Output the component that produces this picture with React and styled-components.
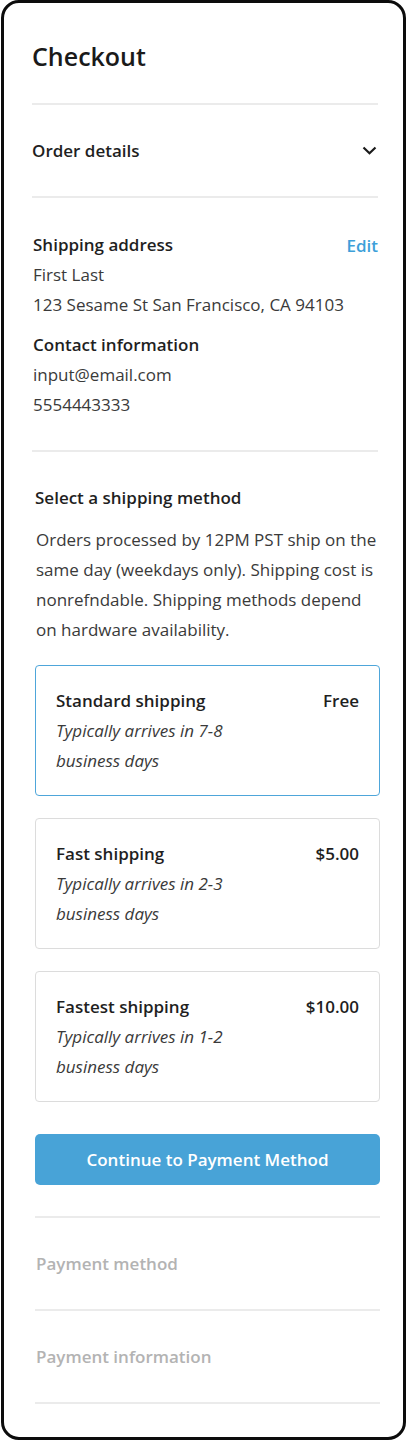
import styled, { createGlobalStyle } from "styled-components";

const GlobalStyle = createGlobalStyle`
	* {
		box-sizing: border-box;
	}
	body {
		margin: 0;
		background: #fff;
		font-family: "Open Sans", "Noto Sans", sans-serif;
		color: #1f1f1f;
	}
`;

const Frame = styled.div`
	width: 405px;
	height: 1440px;
	margin-left: 1px;
	border: 3px solid #0c0c0c;
	border-radius: 18px;
	padding: 37px 25px 0 28px;
	display: flex;
	flex-direction: column;
`;

const Title = styled.h1`
	margin: 0 0 31px;
	font-size: 25px;
	line-height: 32px;
	font-weight: 600;
	color: #1a1a1a;
`;

const Divider = styled.hr`
	margin: 0;
	border: none;
	height: 2px;
	background: #ebebeb;
`;

const Toggle = styled.div`
	height: 91px;
	display: flex;
	align-items: center;
	justify-content: space-between;
	padding: 0 1px 0 ${(p) => (p.$muted ? 1 : 0)}px;
	font-size: 17px;
	font-weight: 600;
	color: ${(p) => (p.$muted ? "#b3b3b3" : "#1f1f1f")};
`;

const Block = styled.div`
	padding: 32px 0 30px 1px;
`;

const Row = styled.div`
	display: flex;
	justify-content: space-between;
	align-items: center;
`;

const Label = styled.div`
	font-size: 17px;
	line-height: 30px;
	font-weight: 600;
	color: #1f1f1f;
	margin-top: ${(p) => p.$gap || 0}px;
`;

const EditLink = styled.a`
	font-size: 17px;
	font-weight: 600;
	color: #3d9fd9;
	text-decoration: none;
`;

const Text = styled.div`
	font-size: 17px;
	line-height: 30px;
	color: #3a3a3a;
`;

const LowerSection = styled.div`
	padding: 31px 0 0 3px;
	margin-right: -2px;
	display: flex;
	flex-direction: column;
`;

const Intro = styled.p`
	margin: 12px 0 20px 1px;
	font-size: 17px;
	line-height: 30px;
	color: #3a3a3a;
`;

const Options = styled.div`
	display: flex;
	flex-direction: column;
	gap: 22px;
`;

const Option = styled.div`
	border: 1px solid ${(p) => (p.$selected ? "#4ea6da" : "#dcdcdc")};
	border-radius: 4px;
	padding: 20px 20px 19px;
`;

const OptionTitle = styled.span`
	font-size: 17px;
	line-height: 30px;
	font-weight: 600;
	color: #1f1f1f;
`;

const Note = styled.div`
	font-size: 17px;
	line-height: 30px;
	font-style: italic;
	color: #3a3a3a;
	width: 210px;
`;

const Button = styled.button`
	width: 100%;
	height: 51px;
	margin: 32px 0 31px;
	border: none;
	border-radius: 5px;
	background: #48a3d7;
	color: #fff;
	font-family: inherit;
	font-size: 17px;
	font-weight: 600;
`;

const shippingOptions = [
	{ name: "Standard shipping", price: "Free", days: "7-8", selected: true },
	{ name: "Fast shipping", price: "$5.00", days: "2-3" },
	{ name: "Fastest shipping", price: "$10.00", days: "1-2" },
];

const Chevron = () => (
	<svg width="15" height="9" viewBox="0 0 15 9" fill="none">
		<polyline points="1.5,1.5 7.5,7.2 13.5,1.5" stroke="#1a1a1a" strokeWidth="2.2" />
	</svg>
);

const App = () => (
	<>
		<GlobalStyle />
		<Frame>
			<Title>Checkout</Title>
			<Divider />
			<Toggle>
				Order details
				<Chevron />
			</Toggle>
			<Divider />

			<Block>
				<Row>
					<Label>Shipping address</Label>
					<EditLink href="#">Edit</EditLink>
				</Row>
				<Text>First Last</Text>
				<Text>123 Sesame St San Francisco, CA 94103</Text>
				<Label $gap={10}>Contact information</Label>
				<Text>input@email.com</Text>
				<Text>5554443333</Text>
			</Block>
			<Divider />

			<LowerSection>
				<Label>Select a shipping method</Label>
				<Intro>
					Orders processed by 12PM PST ship on the same day (weekdays only).
					Shipping cost is nonrefndable. Shipping methods depend on hardware
					availability.
				</Intro>
				<Options>
					{shippingOptions.map((opt) => (
						<Option key={opt.name} $selected={opt.selected}>
							<Row>
								<OptionTitle>{opt.name}</OptionTitle>
								<OptionTitle>{opt.price}</OptionTitle>
							</Row>
							<Note>Typically arrives in {opt.days} business days</Note>
						</Option>
					))}
				</Options>
				<Button>Continue to Payment Method</Button>

				<Divider />
				<Toggle $muted>Payment method</Toggle>
				<Divider />
				<Toggle $muted>Payment information</Toggle>
				<Divider />
			</LowerSection>
		</Frame>
	</>
);

export default App;
